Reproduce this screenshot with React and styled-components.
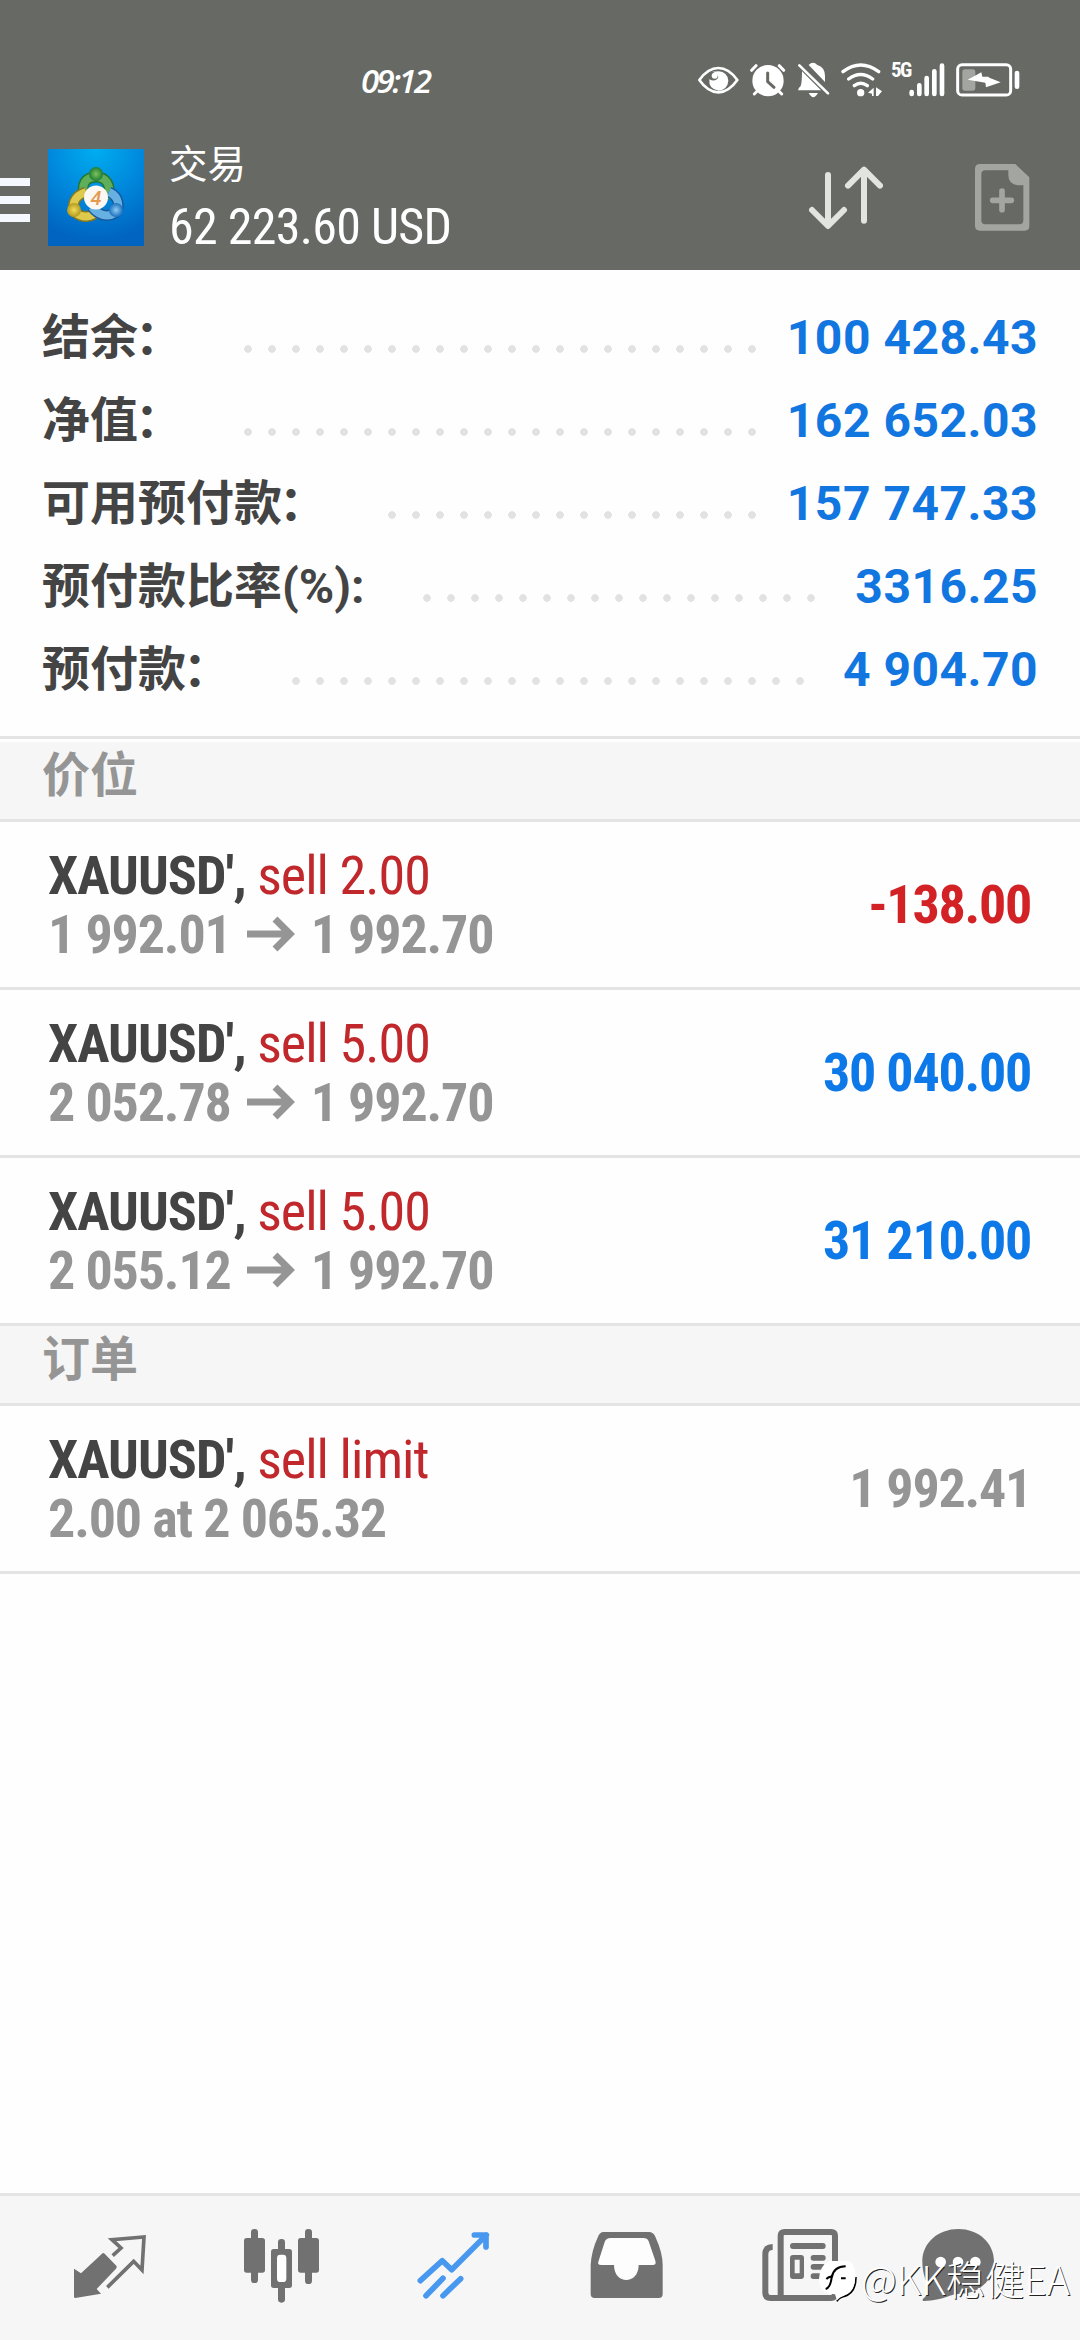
import React from "react"
import styled, { createGlobalStyle } from "styled-components"

const summary = [
  { label: "结余", colon: "：", value: "100 428.43", dots: 22 },
  { label: "净值", colon: "：", value: "162 652.03", dots: 22 },
  { label: "可用预付款", colon: "：", value: "157 747.33", dots: 16 },
  { label: "预付款比率(%):", value: "3316.25", dots: 17 },
  { label: "预付款", colon: "：", value: "4 904.70", dots: 22 },
]

const positions = [
  { id: 1, action: "sell 2.00", from: "1 992.01", to: "1 992.70", profit: "-138.00", tone: "loss" },
  { id: 2, action: "sell 5.00", from: "2 052.78", to: "1 992.70", profit: "30 040.00", tone: "gain" },
  { id: 3, action: "sell 5.00", from: "2 055.12", to: "1 992.70", profit: "31 210.00", tone: "gain" },
]

const tones = {
  loss: "#d32226",
  gain: "#0d78e8",
  muted: "#959595",
}

const StatusIcons = () => (
  <StatusGroup>
    <svg width="41" height="28" viewBox="120 76 123 84">
      <path d="M124 118 Q150 82 181 82 Q212 82 238 118 Q212 155 181 155 Q150 155 124 118Z" fill="none" stroke="#fff" strokeWidth="8" strokeLinejoin="round" />
      <path d="M163 93 Q178 98 181 110 Q172 126 154 116 Q151 146 182 150 Q209 146 211 120 Q208 94 182 92Z" fill="#fff" />
      <circle cx="170" cy="105" r="9" fill="#fff" />
    </svg>
    <svg width="36" height="34" viewBox="278 68 108 102">
      <circle cx="332" cy="121" r="47" fill="#fff" />
      <path d="M283 90 L296 76 M366 76 L379 90 M300 152 L291 161 M364 152 L373 161" stroke="#fff" strokeWidth="9" strokeLinecap="round" />
      <path d="M331 98 V124 L350 141" fill="none" stroke="#676965" strokeWidth="9" strokeLinecap="round" strokeLinejoin="round" />
    </svg>
    <svg width="33" height="36" viewBox="418 66 99 108">
      <path d="M453 75 Q466 62 479 75 Q502 82 502 108 V126 Z M433 94 L490 151 H421 Q421 145 429 138 Q433 128 433 94Z M453 159 H481 Q467 184 453 159Z" fill="#fff" />
      <path d="M425 76 L511 160" stroke="#fff" strokeWidth="8" strokeLinecap="round" />
    </svg>
    <svg width="42" height="36" viewBox="542 62 126 108">
      <path d="M548 91 Q601 51 655 91 M565 113 Q601 86 637 113 M582 133 Q601 118 621 133" fill="none" stroke="#fff" strokeWidth="10" strokeLinecap="round" />
      <circle cx="601" cy="154" r="11" fill="#fff" />
      <path d="M623 154 L640 139 V164 H635 V157Z M647 138 L665 150 L653 164 H647Z" fill="#fff" />
    </svg>
    <Network>5G</Network>
    <svg width="36" height="34" viewBox="743 65 108 102">
      <path d="M751 152 V158 M774 132 V158 M796 110 V158 M819 90 V158 M842 73 V158" stroke="#fff" strokeWidth="14" strokeLinecap="round" />
    </svg>
    <svg width="64" height="34" viewBox="887 68 192 102">
      <rect x="892" y="73" width="159" height="91" rx="13" fill="none" stroke="#fff" strokeWidth="9" />
      <rect x="906" y="87" width="39" height="64" rx="8" fill="#a3a5a1" />
      <path d="M922 118 L963 96 L966 109 H984 L987 112 L1021 126 L977 141 L975 127Z" fill="#fff" />
      <rect x="1063" y="91" width="14" height="55" rx="7" fill="#fff" />
    </svg>
  </StatusGroup>
)

const AppLogo = () => (
  <svg width="96" height="97" viewBox="0 0 96 97">
    <defs>
      <radialGradient id="sky" cx="50%" cy="0%" r="95%">
        <stop offset="0" stopColor="#00aef0" />
        <stop offset="0.5" stopColor="#0089dd" />
        <stop offset="1" stopColor="#0064c0" />
      </radialGradient>
      <radialGradient id="green"><stop offset="0" stopColor="#7fc25c" /><stop offset="1" stopColor="#1f7d34" /></radialGradient>
      <radialGradient id="yellow"><stop offset="0" stopColor="#f4dc5c" /><stop offset="1" stopColor="#b39a1c" /></radialGradient>
      <radialGradient id="blue"><stop offset="0" stopColor="#8ccdf4" /><stop offset="1" stopColor="#1d70bd" /></radialGradient>
    </defs>
    <rect width="96" height="97" fill="url(#sky)" />
    <path d="M37 48 C32 35 38 28 48 28 C58 28 64 36 60 50" fill="none" stroke="#23742f" strokeWidth="11" />
    <path d="M37 48 C32 35 38 28 48 28 C58 28 64 36 60 50" fill="none" stroke="#5fae5a" strokeWidth="8" />
    <path d="M38 43 C25 47 23 58 28 64 C34 69 44 69 49 62" fill="none" stroke="#817822" strokeWidth="11" />
    <path d="M38 43 C25 47 23 58 28 64 C34 69 44 69 49 62" fill="none" stroke="#ddc94b" strokeWidth="8" />
    <path d="M61 43 C72 48 72 59 67 64 C59 69 50 66 44 58" fill="none" stroke="#17599e" strokeWidth="11" />
    <path d="M61 43 C72 48 72 59 67 64 C59 69 50 66 44 58" fill="none" stroke="#66b1e2" strokeWidth="8" />
    <circle cx="48" cy="25" r="7" fill="url(#green)" />
    <circle cx="26" cy="61" r="7" fill="url(#yellow)" />
    <circle cx="68" cy="61" r="7" fill="url(#blue)" />
    <circle cx="48" cy="48.500" r="12" fill="#fbf8f4" />
    <text x="48" y="56" textAnchor="middle" fontFamily="Roboto, sans-serif" fontSize="20" fontStyle="italic" fontWeight="500" fill="#e59a50">4</text>
  </svg>
)

const SortIcon = () => (
  <svg width="74" height="64" viewBox="447 377 222 192">
    <path d="M504 404 V556 M456 509 L504 557 L552 509 M612 541 V388 M564 436 L612 388 L660 436" fill="none" stroke="#e2e4e0" strokeWidth="18" strokeLinecap="round" strokeLinejoin="round" />
  </svg>
)

const NewOrderIcon = () => (
  <svg width="55" height="67" viewBox="945 374 165 201">
    <path d="M960 374 H1066 L1108 414 V560 Q1108 574 1094 574 H960 Q945 574 945 560 V389 Q945 374 960 374Z M976 393 Q964 393 964 405 V543 Q964 555 976 555 H1078 Q1090 555 1090 543 V438 H1076 Q1045 436 1045 408 V393Z" fill="#a3a5a1" fillRule="evenodd" />
    <path d="M1026 455 V511 M998 483 H1054" stroke="#a3a5a1" strokeWidth="17" strokeLinecap="round" />
  </svg>
)

const NavIcon = ({ children }) => (
  <NavSvg width="84" height="80" viewBox="0 0 252 240">{children}</NavSvg>
)

const BottomNav = () => (
  <Nav>
    <NavIcon>
      <path d="M12 128 V212 q0 4 4 4 L93 203 L80 189 L138 128 q4-5 1-9 L104 83 q-4-4-8 0 L33 142Z" fill="#717171" />
      <path d="M128 89 L153 66 L126 41 L222 33 L216 132 L191 106 L112 184" fill="none" stroke="#717171" strokeWidth="11" />
    </NavIcon>
    <NavIcon>
      <g fill="#717171">
        <rect x="12" y="36" width="63" height="104" rx="8" />
        <rect x="33" y="9" width="21" height="162" rx="10" />
        <rect x="93" y="69" width="63" height="117" rx="8" />
        <rect x="114" y="39" width="21" height="191" rx="10" />
        <rect x="174" y="36" width="63" height="104" rx="8" />
        <rect x="195" y="9" width="21" height="165" rx="10" />
      </g>
      <rect x="111" y="86" width="28" height="82" rx="10" fill="#fff" />
    </NavIcon>
    <NavIcon>
      <path d="M31 164 L97 104 L125 131 L229 27 M193 27 H228 V63 M48 209 L99 157 M99 209 L152 158" fill="none" stroke="#4898f0" strokeWidth="17" strokeLinecap="round" strokeLinejoin="round" />
    </NavIcon>
    <NavIcon>
      <path d="M70 18 H207 Q220 18 226 32 Q248 80 248 117 V204 Q248 216 236 216 H44 Q32 216 32 204 V117 Q34 75 54 32 Q60 18 70 18Z" fill="#717171" />
      <path d="M92 36 H190 Q202 36 206 46 L226 104 Q230 117 218 117 H176 C176 177 102 177 102 117 H64 Q50 117 56 104 L74 48 Q78 36 92 36Z" fill="#fdfdfd" />
    </NavIcon>
    <NavIcon>
      <path d="M68 63 Q46 63 46 85 V200 Q46 216 62 216 H243 Q255 216 255 204 V30 Q255 18 243 18 H104 Q92 18 92 30 V216" fill="none" stroke="#717171" strokeWidth="18" />
      <g fill="#717171">
        <rect x="120" y="51" width="107" height="18" rx="9" />
        <path d="M129 87 H153 Q162 87 162 96 V150 Q162 159 153 159 H129 Q120 159 120 150 V96 Q120 87 129 87Z M134 101 V142 H149 V101Z" fillRule="evenodd" />
        <rect x="182" y="87" width="45" height="17" rx="8" />
        <rect x="182" y="114" width="45" height="17" rx="8" />
        <rect x="182" y="142" width="45" height="17" rx="8" />
      </g>
    </NavIcon>
    <NavIcon>
      <path d="M115 9 C175 9 222 50 222 106 C222 162 178 203 120 203 C85 205 75 222 12 225 C7 225 6 221 12 216 C23 205 26 195 26 180 C14 160 7 135 7 106 C7 50 55 9 115 9Z" fill="#717171" />
      <g fill="#fff">
        <circle cx="62" cy="108" r="16" />
        <circle cx="114" cy="108" r="16" />
        <circle cx="166" cy="108" r="16" />
      </g>
    </NavIcon>
  </Nav>
)

const SummaryRow = ({ item }) => (
  <SummaryLine>
    <span>{item.label}{item.colon && <Colon>{item.colon}</Colon>}</span>
    <Leader $dots={item.dots} />
    <Amount>{item.value}</Amount>
  </SummaryLine>
)

const TradeRow = ({ action, value, tone, children }) => (
  <Trade>
    <div>
      <Title>XAUUSD', <Action>{action}</Action></Title>
      <Detail>{children}</Detail>
    </div>
    <Profit $tone={tone}>{value}</Profit>
  </Trade>
)

const App = () => (
  <Screen>
    <GlobalStyle />
    <Header>
      <StatusBar>
        <Clock>09:12</Clock>
        <StatusIcons />
      </StatusBar>
      <Toolbar>
        <Menu>
          <i />
          <i />
          <i />
        </Menu>
        <AppLogo />
        <Heading>
          <h1>交易</h1>
          <p>62 223.60 USD</p>
        </Heading>
        <Actions>
          <SortIcon />
          <NewOrderIcon />
        </Actions>
      </Toolbar>
    </Header>
    <Summary>
      {summary.map(item => <SummaryRow key={item.label} item={item} />)}
    </Summary>
    <SectionTitle $first>价位</SectionTitle>
    {positions.map(p => (
      <TradeRow key={p.id} action={p.action} value={p.profit} tone={p.tone}>
        {p.from}
        <svg width="48" height="36" viewBox="0 0 48 36">
          <path d="M0 18 H43 M28 3 L43 18 L28 33" fill="none" stroke="#959595" strokeWidth="7" />
        </svg>
        {p.to}
      </TradeRow>
    ))}
    <SectionTitle>订单</SectionTitle>
    <TradeRow action="sell limit" value="1 992.41" tone="muted">2.00 at 2 065.32</TradeRow>
    <Spacer />
    <BottomNav />
    <Watermark>
      <svg width="46" height="46" viewBox="0 0 138 138">
        <path d="M66 133 Q70 124 88 118 Q123 108 123 60" fill="none" stroke="#000" strokeWidth="5" />
        <path d="M42 12 H96 Q121 14 121 60 Q120 104 86 116 Q74 120 66 130 L60 112 Q12 112 12 66 Q14 26 42 12Z" fill="#fff" />
        <path d="M32 96 Q46 92 50 62 Q56 28 92 28 M34 66 Q44 56 54 60 M78 64 H92" fill="none" stroke="#000" strokeWidth="6" />
      </svg>
      <span>@KK稳健EA</span>
    </Watermark>
  </Screen>
)

const GlobalStyle = createGlobalStyle`
  * {
    box-sizing: border-box;
  }

  body {
    margin: 0;
  }

  h1, h2, p {
    margin: 0;
  }

  svg {
    display: block;
    flex: none;
  }
`

const Screen = styled.div`
  background: #fefefe;
  display: flex;
  flex-direction: column;
  font-family: Roboto, "Noto Sans CJK SC", sans-serif;
  height: 2340px;
  overflow: hidden;
  position: relative;
  width: 1080px;
`

const Header = styled.header`
  background: #676965;
  color: #fff;
  height: 270px;
`

const StatusBar = styled.div`
  align-items: center;
  display: flex;
  height: 130px;
  justify-content: space-between;
  padding: 29px 60px 0 361px;
`

const Clock = styled.span`
  font-family: "Open Sans", sans-serif;
  font-size: 33px;
  font-style: italic;
  font-weight: 600;
  letter-spacing: -2.6px;
  padding-top: 2px;
`

const StatusGroup = styled.div`
  align-items: center;
  display: flex;
  gap: 11px;
`

const Network = styled.span`
  align-self: flex-start;
  font-size: 21px;
  font-stretch: 75%;
  font-weight: 700;
  letter-spacing: -1.5px;
  line-height: 20px;
  margin: -2px -11px 0 -3px;
  width: 18px;
`

const Toolbar = styled.div`
  align-items: center;
  display: flex;
  height: 140px;
  padding-bottom: 5px;
`

const Menu = styled.div`
  display: flex;
  flex-direction: column;
  gap: 10px;
  margin: 5px 18px 0 0;
  width: 30px;

  i {
    background: #f6f8ff;
    height: 8px;
  }
`

const Heading = styled.div`
  flex: 1;
  padding-left: 25px;

  h1 {
    font-size: 38.5px;
    font-weight: 400;
    line-height: 58px;
  }

  p {
    font-family: "Roboto Condensed", Roboto, sans-serif;
    font-size: 50px;
    font-stretch: 75%;
    letter-spacing: -0.7px;
    line-height: 66px;
  }
`

const Actions = styled.div`
  align-items: center;
  display: flex;
  gap: 92px;
  padding-right: 50px;
`

const Summary = styled.section`
  border-bottom: 3px solid #e4e4e4;
  height: 469px;
  padding: 26px 42px 0;
`

const SummaryLine = styled.div`
  align-items: center;
  color: #444;
  display: flex;
  font-size: 48px;
  font-weight: 700;
  height: 83px;
  line-height: 83px;
`

const Colon = styled.span`
  margin: 0 3px 0 -3px;
`

const Leader = styled.div`
  background: radial-gradient(circle at 12px 4px, #e2e2e2 3.5px, transparent 4px) 0 0 / 24px 8px repeat-x;
  height: 8px;
  margin: 22px auto 0 50px;
  width: ${props => props.$dots * 24}px;
`

const Amount = styled.span`
  color: #1276e0;
  letter-spacing: 0.5px;
`

const SectionTitle = styled.h2`
  background: #f6f6f6;
  border-bottom: 3px solid #e4e4e4;
  color: #959595;
  flex: none;
  font-size: 48px;
  font-weight: 700;
  height: 80px;
  line-height: 68px;
  margin-top: ${props => (props.$first ? "3px" : 0)};
  padding-left: 42px;
`

const Trade = styled.div`
  align-items: center;
  border-bottom: 3px solid #e4e4e4;
  display: flex;
  font-family: "Roboto Condensed", Roboto, sans-serif;
  font-size: 54px;
  font-stretch: 75%;
  font-weight: 700;
  height: 168px;
  justify-content: space-between;
  padding: 0 49px 0 48px;
`

const Title = styled.div`
  color: #444;
  letter-spacing: -0.95px;
  line-height: 59px;
`

const Action = styled.span`
  color: #c0282c;
  font-weight: 400;
`

const Detail = styled.div`
  align-items: center;
  color: #959595;
  display: flex;
  gap: 16px;
  letter-spacing: -1.15px;
  line-height: 59px;
`

const Profit = styled.div`
  color: ${props => tones[props.$tone]};
  letter-spacing: -1.25px;
`

const Spacer = styled.div`
  flex: 1;
`

const Nav = styled.nav`
  background: #f6f6f6;
  border-top: 3px solid #e4e4e4;
  display: flex;
  gap: 86px;
  height: 147px;
  padding: 30px 0 0 70px;
`

const NavSvg = styled.svg`
  overflow: visible;
`

const Watermark = styled.div`
  align-items: center;
  bottom: 34px;
  color: #fff;
  display: flex;
  font-family: "Noto Sans CJK SC", sans-serif;
  font-size: 39.3px;
  font-weight: 300;
  left: 815px;
  line-height: 56px;
  position: absolute;
  text-shadow: 1px 1px 0 #222;

  span {
    margin-top: -4px;
  }
`

export default App
